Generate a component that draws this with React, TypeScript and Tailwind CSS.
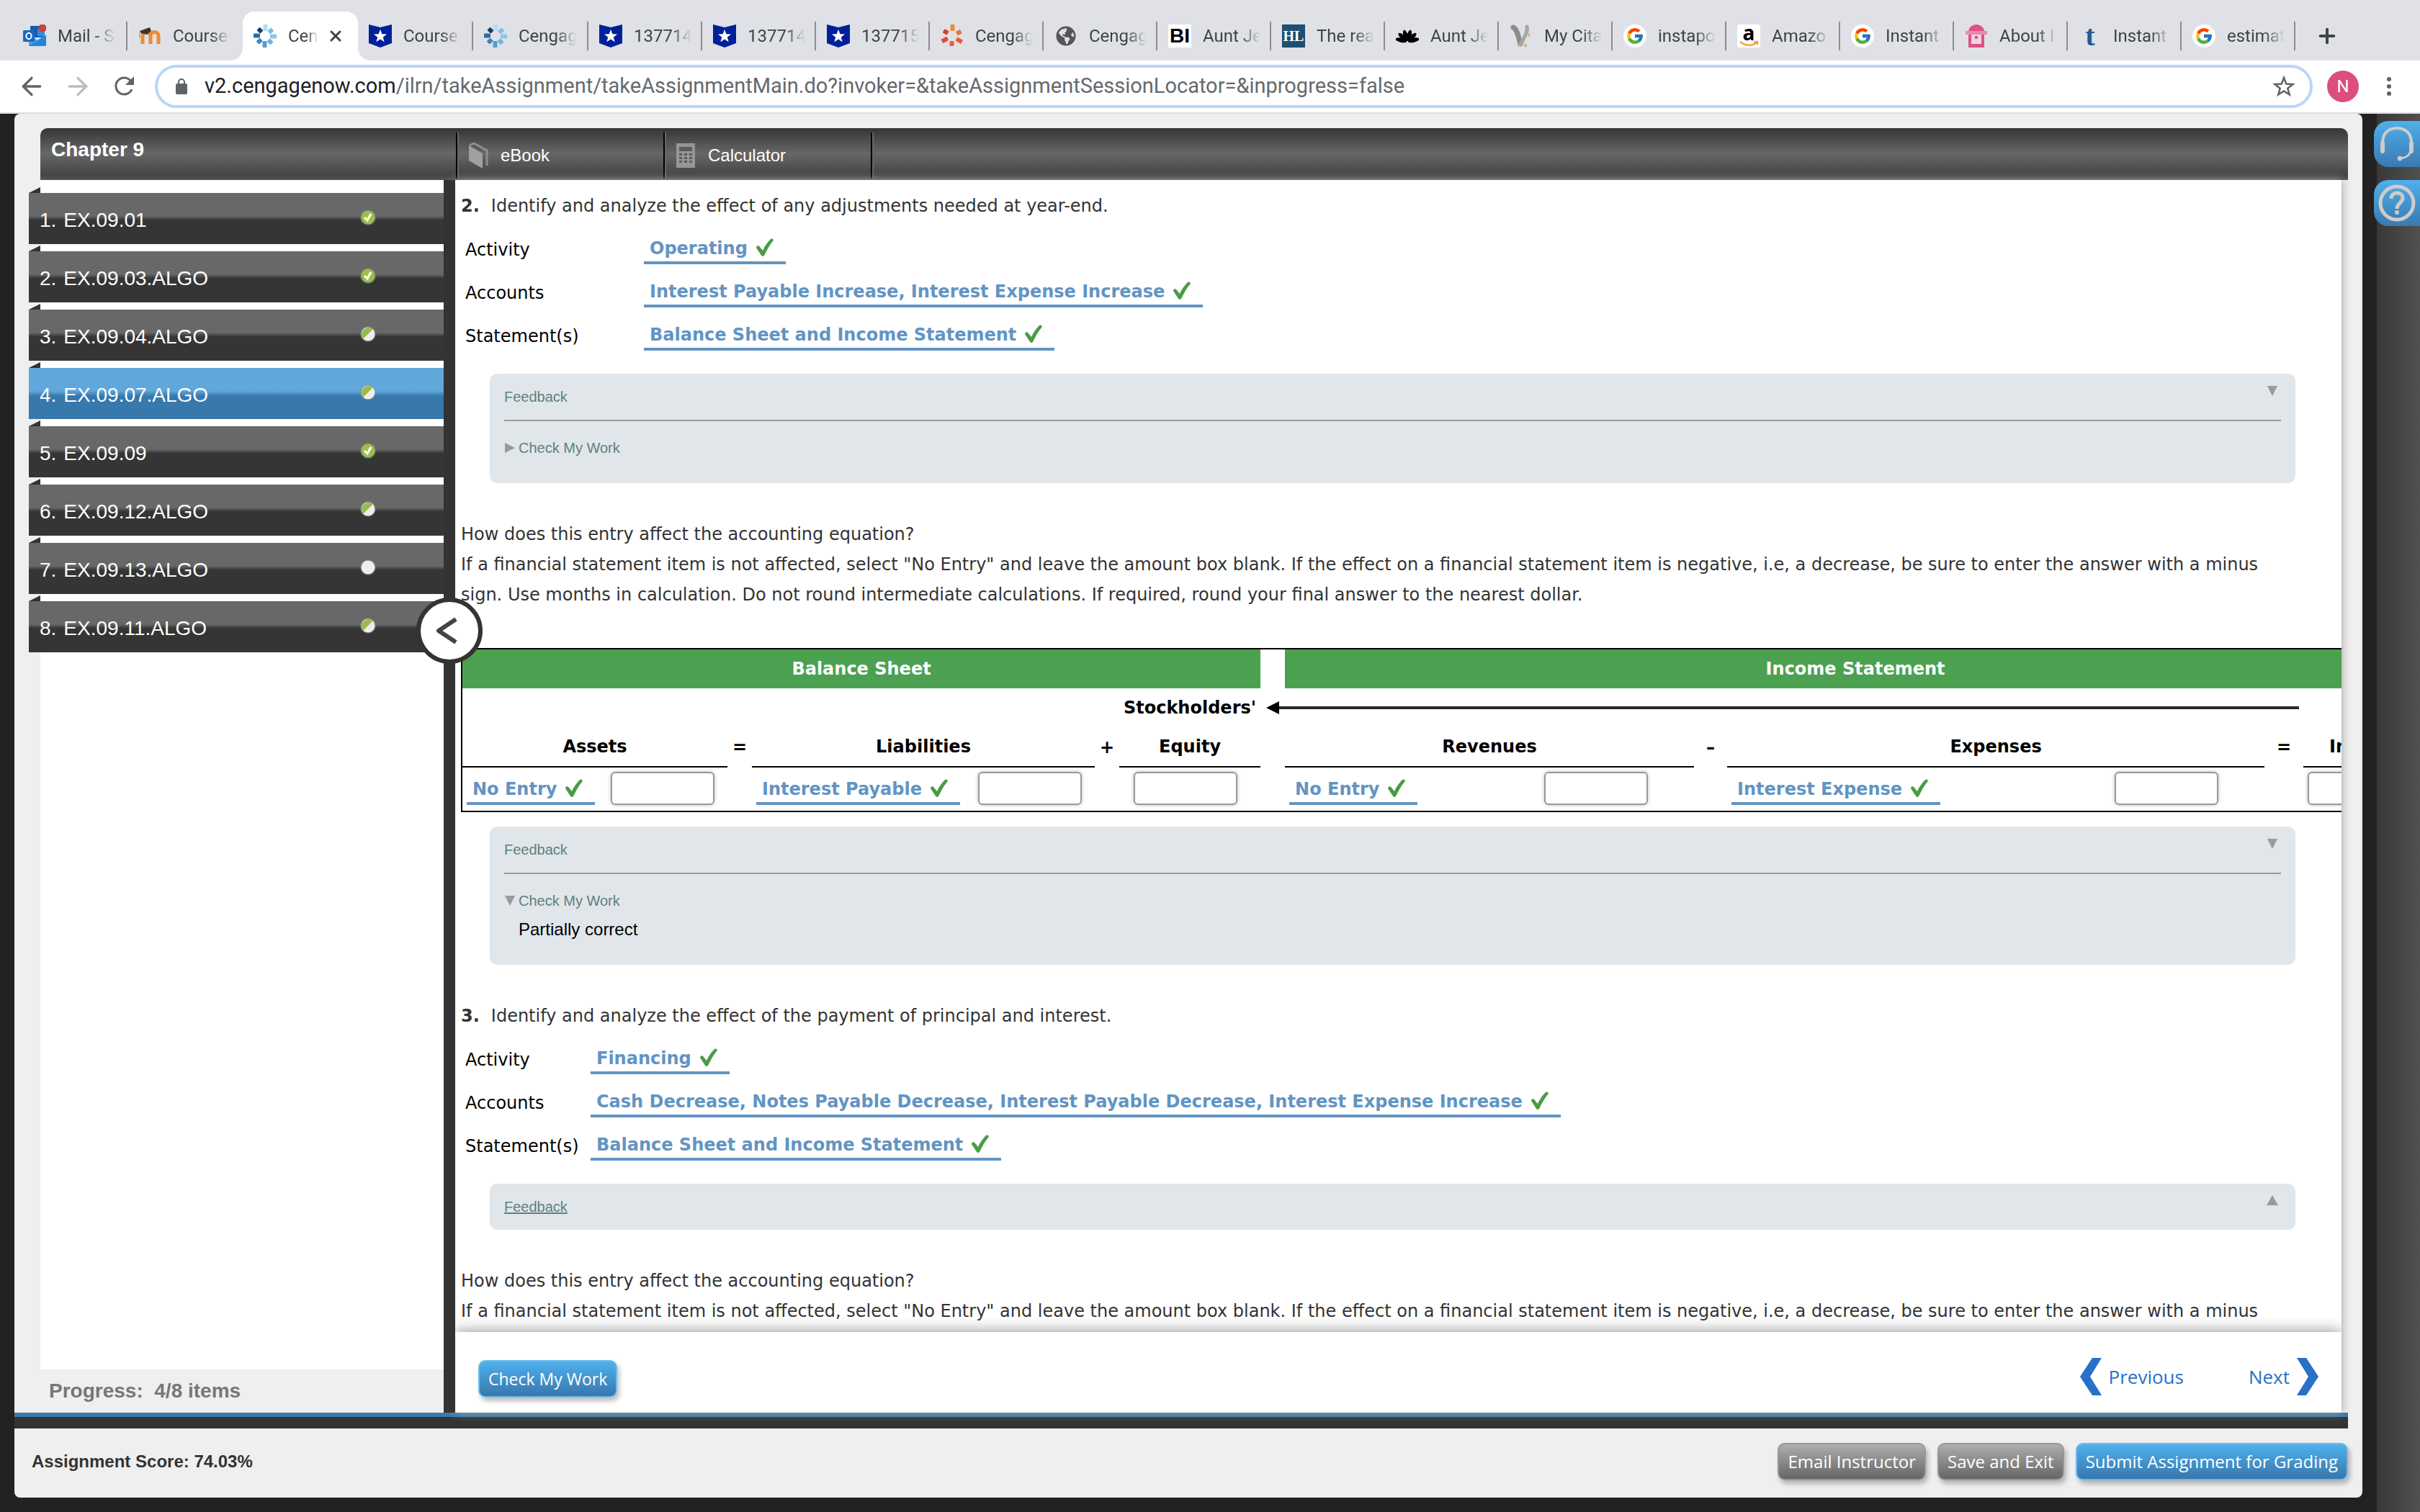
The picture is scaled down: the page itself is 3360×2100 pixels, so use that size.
import React from 'react';
import { FcGoogle } from 'react-icons/fc';
import { FaGlobeAmericas } from 'react-icons/fa';
import { ArrowLeft, ArrowRight, X, Plus } from 'lucide-react';

type Status = 'done' | 'partial' | 'empty';

const RING_BLUE = ['#b5dcf2', '#7fbfe3', '#8cc6e6', '#6fb4dc', '#4f9fd0', '#3a86bd', '#2b6ea5', '#173f66'];
const RING_ORANGE = ['#ef8b3a', '#e9743a', '#e5603a', '#e5603a', '#e04a38', '#d83a36'];

const Ring = ({ colors }: { colors: string[] }) => (
  <svg viewBox="0 0 32 32" className="h-8 w-8">
    {colors.map((color, i) => (
      <rect
        key={i}
        x="13.5"
        y={i % 2 ? 2 : 0}
        width="6"
        height={i % 2 ? 7 : 9}
        rx="1"
        fill={color}
        transform={`rotate(${(360 / colors.length) * i} 16 16)`}
      />
    ))}
  </svg>
);

const Shield = () => (
  <svg viewBox="0 0 32 32" className="h-8 w-8">
    <path d="M0 0l16 4L32 0v26l-16 6L0 26z" fill="#00209a" />
    <path d="M16 7l2.400 6.300 6.600.2-5.200 4.200 1.900 6.500L16 20.400l-5.700 3.800 1.900-6.500L7 13.500l6.600-.2z" fill="#fff" />
  </svg>
);

const Outlook = () => (
  <svg viewBox="0 0 32 32" className="h-8 w-8">
    <rect x="10" y="2" width="20" height="16" rx="1" fill="#1a5aa8" />
    <rect x="20" y="6" width="10" height="10" fill="#2f8fdf" />
    <path d="M8 14l12 8 12-8v14a2 2 0 0 1-2 2H10a2 2 0 0 1-2-2z" fill="#3fa2ea" />
    <path d="M8 30l24-15v13a2 2 0 0 1-2 2z" fill="#2484d8" />
    <rect x="0" y="8" width="16" height="16" rx="1.500" fill="#1769c4" />
    <ellipse cx="8" cy="16" rx="3.600" ry="4.200" fill="none" stroke="#fff" strokeWidth="2" />
    <circle cx="27" cy="5" r="5.500" fill="#cc3f3a" />
  </svg>
);

const Moodle = () => (
  <svg viewBox="0 0 32 32" className="h-8 w-8">
    <path d="M6 27V16a5 5 0 0 1 11 0v11M17 16a5 5 0 0 1 11 0v11" fill="none" stroke="#ee8a38" strokeWidth="5" />
    <path d="M2 9L16 4l2 5-6 5-8-2z" fill="#3b3431" />
    <path d="M2 10v9" stroke="#b9a79a" strokeWidth="1.500" />
  </svg>
);

const Peacock = () => (
  <svg viewBox="0 0 32 32" className="h-8 w-8">
    {[-76, -46, -16, 16, 46, 76].map((angle) => (
      <ellipse key={angle} cx="16" cy="15" rx="3" ry="8" transform={`rotate(${angle} 16 24)`} />
    ))}
  </svg>
);

const Vine = () => (
  <svg viewBox="0 0 32 32" className="h-8 w-8" fill="none" strokeLinecap="round">
    <path d="M5 4c5 2 7 12 10 23" stroke="#8b8c8c" strokeWidth="7" />
    <path d="M24 3c2 8-4 14-8 24" stroke="#a5a6a6" strokeWidth="5" />
    <path d="M12 29h2M22 28v2M27 14v1" stroke="#e0a868" strokeWidth="3" />
  </svg>
);

const Cupcake = () => (
  <svg viewBox="0 0 32 32" className="h-8 w-8">
    <path d="M5 10a11 10 0 0 1 22 0z" fill="#dd5286" />
    <rect x="1" y="9" width="30" height="5" fill="#e58bb0" />
    <path d="M5 14h22v18H5z" fill="#dd5286" />
    <path d="M9 14h14v13H9z" fill="#f3d3e0" />
    <path d="M14 16h4v4h-4z" fill="#dd5286" />
  </svg>
);

const Google = () => (
  <span className="flex h-8 w-8 items-center justify-center rounded-full bg-white">
    <FcGoogle className="h-[26px] w-[26px]" />
  </span>
);

const Amazon = () => (
  <span className="relative flex h-8 w-8 justify-center rounded bg-white font-['Open_Sans',sans-serif] text-[28px] leading-[22px] font-bold text-black">
    a
    <svg viewBox="0 0 32 32" className="absolute inset-0">
      <path d="M4 24c7 6 17 6 23 1M28 28v-4h-5" fill="none" stroke="#f3a23a" strokeWidth="2.500" />
    </svg>
  </span>
);

const tabs: { icon: React.ReactNode; title: string }[] = [
  { icon: <Outlook />, title: 'Mail - S' },
  { icon: <Moodle />, title: 'Course' },
  { icon: <Ring colors={RING_BLUE} />, title: 'Cen' },
  { icon: <Shield />, title: 'Course' },
  { icon: <Ring colors={RING_BLUE} />, title: 'Cengag' },
  { icon: <Shield />, title: '137714' },
  { icon: <Shield />, title: '137714' },
  { icon: <Shield />, title: '137715' },
  { icon: <Ring colors={RING_ORANGE} />, title: 'Cengag' },
  { icon: <FaGlobeAmericas className="h-7 w-8 text-[#54565b]" />, title: 'Cengag' },
  {
    icon: <span className="flex h-8 w-8 items-center justify-center bg-white font-['Liberation_Sans',sans-serif] text-[28px] font-bold text-black">BI</span>,
    title: 'Aunt Je',
  },
  {
    icon: <span className="flex h-8 w-8 items-center justify-center bg-[#1f4e70] font-['Liberation_Serif',serif] text-xl font-bold text-white">HL</span>,
    title: 'The rea',
  },
  { icon: <Peacock />, title: 'Aunt Je' },
  { icon: <Vine />, title: 'My Cita' },
  { icon: <Google />, title: 'instapo' },
  { icon: <Amazon />, title: 'Amazo' },
  { icon: <Google />, title: 'Instant' },
  { icon: <Cupcake />, title: 'About I' },
  {
    icon: <span className="flex h-8 w-8 items-center justify-center font-['Liberation_Serif',serif] text-[40px] leading-8 font-bold text-[#235a92]">t</span>,
    title: 'Instant',
  },
  { icon: <Google />, title: 'estimat' },
];

const ACTIVE_TAB = 2;

const TabStrip = () => (
  <div className="flex h-[84px] shrink-0 bg-[#dfe1e6] pt-4 pl-[17px] text-2xl text-[#3f4246]">
    {tabs.map((tab, i) => {
      const active = i === ACTIVE_TAB;
      const divider = !active && i !== ACTIVE_TAB - 1;
      return (
        <div
          key={i}
          className={`relative flex min-w-0 items-center pl-[15px] ${i < 5 ? 'basis-40' : 'basis-[158px]'} ${
            active ? 'rounded-t-2xl bg-white' : ''
          }`}
        >
          {active && (
            <>
              <span className="absolute bottom-0 -left-4 h-4 w-4 bg-[radial-gradient(circle_at_0_0,transparent_15px,white_16px)]" />
              <span className="absolute -right-4 bottom-0 h-4 w-4 bg-[radial-gradient(circle_at_100%_0,transparent_15px,white_16px)]" />
            </>
          )}
          <span className="shrink-0">{tab.icon}</span>
          <span
            className={`ml-4 overflow-hidden whitespace-nowrap ${
              active
                ? 'w-[42px] [mask-image:linear-gradient(to_right,black_60%,transparent)]'
                : 'w-20 [mask-image:linear-gradient(to_right,black_65%,transparent)]'
            }`}
          >
            {tab.title}
          </span>
          {active && (
            <button aria-label="Close tab" className="ml-3">
              <X className="h-6 w-6" strokeWidth={3} />
            </button>
          )}
          {divider && <span className="absolute right-0 h-10 w-0.5 bg-[#8b8d91]" />}
        </div>
      );
    })}
    <button aria-label="New tab" className="ml-7 flex items-center">
      <Plus className="h-8 w-8" strokeWidth={3} />
    </button>
  </div>
);

const AddressBar = () => (
  <div className="flex h-[74px] shrink-0 items-center border-b-2 border-[#dcdde3] bg-white pr-10 pl-6 text-[#5f6368]">
    <button aria-label="Back">
      <ArrowLeft className="h-10 w-10" strokeWidth={2} />
    </button>
    <button aria-label="Forward" className="ml-6 text-[#bbbdbf]">
      <ArrowRight className="h-10 w-10" strokeWidth={2} />
    </button>
    <button aria-label="Reload" className="ml-[30px]">
      <svg viewBox="0 0 30 30" className="h-[30px] w-[30px]">
        <path d="M25 19a11.500 11.500 0 1 1-1.500-11.500" fill="none" stroke="currentColor" strokeWidth="3" />
        <path d="M28 1v12H16z" fill="currentColor" />
      </svg>
    </button>
    <div className="ml-[27px] flex h-[60px] min-w-0 flex-1 items-center rounded-full border-4 border-[#b9d6fb] pr-5 pl-[25px]">
      <svg viewBox="0 0 16 22" className="h-[22px] w-4 shrink-0">
        <rect y="7" width="16" height="15" rx="2" fill="#5f6368" />
        <path d="M4 8V5a4 4 0 0 1 8 0v3" fill="none" stroke="#5f6368" strokeWidth="2" />
      </svg>
      <div className="ml-6 flex-1 text-[29px] whitespace-nowrap text-[#66696d]">
        <span className="text-[#202124]">v2.cengagenow.com</span>
        /ilrn/takeAssignment/takeAssignmentMain.do?invoker=&amp;takeAssignmentSessionLocator=&amp;inprogress=false
      </div>
      <button aria-label="Bookmark this page">
        <svg viewBox="0 0 32 32" className="h-8 w-8">
          <path d="M16 4l3.300 8.500 9.200.5-7.200 5.700 2.500 8.800L16 22.500l-7.800 5 2.500-8.800L3.500 13l9.200-.5z" fill="none" stroke="#5f6368" strokeWidth="2.500" />
        </svg>
      </button>
    </div>
    <button className="ml-5 flex h-11 w-11 items-center justify-center rounded-full bg-[#dc4f7b] text-2xl text-white">N</button>
    <button aria-label="Menu" className="ml-[39px] flex flex-col gap-1">
      <span className="h-1.5 w-1.5 rounded-full bg-[#5f6368]" />
      <span className="h-1.5 w-1.5 rounded-full bg-[#5f6368]" />
      <span className="h-1.5 w-1.5 rounded-full bg-[#5f6368]" />
    </button>
  </div>
);

const StatusDot = ({ status }: { status: Status }) => (
  <svg viewBox="0 0 24 24" className="h-6 w-6">
    <circle cx="12" cy="12" r="11" fill="#888" opacity="0.5" />
    <circle cx="12" cy="12" r="9.500" fill={status === 'done' ? '#9bbf4a' : '#ededed'} />
    {status === 'done' && <path d="M7 12l4 4 5-9" fill="none" stroke="#fff" strokeWidth="3" />}
    {status === 'partial' && <path d="M5.300 18.700A9.500 9.500 0 0 1 18.700 5.300z" fill="#98bb49" />}
  </svg>
);

const questions: { name: string; status: Status }[] = [
  { name: 'EX.09.01', status: 'done' },
  { name: 'EX.09.03.ALGO', status: 'done' },
  { name: 'EX.09.04.ALGO', status: 'partial' },
  { name: 'EX.09.07.ALGO', status: 'partial' },
  { name: 'EX.09.09', status: 'done' },
  { name: 'EX.09.12.ALGO', status: 'partial' },
  { name: 'EX.09.13.ALGO', status: 'empty' },
  { name: 'EX.09.11.ALGO', status: 'partial' },
];

const Sidebar = () => (
  <aside className="flex w-[596px] shrink-0 flex-col pl-9">
    <nav className="flex-1 bg-white pt-[18px]">
      <ul className="-ml-4 flex flex-col gap-2.5">
        {questions.map((q, i) => (
          <li key={q.name} className="relative">
            <span className="absolute -top-2 left-0 h-2 w-4 bg-[#333] [clip-path:polygon(100%_0,100%_100%,0_100%)]" />
            <a
              href="#"
              className={`flex h-[71px] items-center justify-between pr-[93px] pb-1 pl-[15px] text-[28px] text-white ${
                i === 3
                  ? 'bg-[linear-gradient(#60a7dc_45%,#3778ad_55%)]'
                  : 'bg-[linear-gradient(#686868_45%,#353535_53%)]'
              }`}
            >
              <span className="pt-2">
                <span className="mr-2.5">{i + 1}.</span>
                {q.name}
              </span>
              <StatusDot status={q.status} />
            </a>
          </li>
        ))}
      </ul>
    </nav>
    <div className="flex h-[60px] items-center pl-3 text-[28px] font-bold whitespace-pre text-[#777]">{'Progress:  4/8 items'}</div>
  </aside>
);

const Check = () => (
  <svg viewBox="0 0 24 26" className="h-[26px] w-6 shrink-0">
    <path d="M0 13c0-3 3-4 5-1l4 5C12 10 16 5 20 1c2-1.500 4.500 0 3.500 2.500C18 10 15 16 11.500 23c-1 2.500-3.500 2.500-5 0z" fill="#4b9b45" />
  </svg>
);

const Answer = ({ children }: { children: string }) => (
  <span className="flex items-start border-b-4 border-[#6294c3] pr-[17px] pb-1 pl-2 text-2xl leading-7 font-bold whitespace-nowrap text-[#6294c3]">
    <span className="mr-3">{children}</span>
    <Check />
  </span>
);

const QuestionTitle = ({ num, children }: { num: number; children: string }) => (
  <p>
    <b className="mr-4">{num}.</b>
    {children}
  </p>
);

const AnswerList = ({ rows, wide }: { rows: [string, string][]; wide?: boolean }) => (
  <table className="ml-1.5 border-collapse text-black">
    <tbody>
      {rows.map(([label, value]) => (
        <tr key={label} className="h-[60px] align-bottom">
          <th scope="row" className={`pb-1.5 text-left leading-7 font-normal ${wide ? 'w-[248px]' : 'w-[174px]'}`}>
            {label}
          </th>
          <td>
            <div className="flex">
              <Answer>{value}</Answer>
            </div>
          </td>
        </tr>
      ))}
    </tbody>
  </table>
);

const Triangle = ({ dir }: { dir: 'up' | 'down' | 'right' }) => (
  <svg viewBox="0 0 16 16" className="h-4 w-4 shrink-0">
    {dir === 'up' && <path d="M8 0l8 14H0z" fill="#959b9f" />}
    {dir === 'down' && <path d="M1 1h14L8 15z" fill="#959b9f" />}
    {dir === 'right' && <path d="M1 1l14 7-14 7z" fill="#959b9f" />}
  </svg>
);

interface FeedbackProps {
  open?: boolean;
  result?: string;
  className?: string;
}

const Feedback: React.FC<FeedbackProps> = ({ open = true, result, className }) => (
  <section
    className={`mr-16 ml-10 rounded-[10px] bg-[#e1e6ea] px-5 font-['Liberation_Sans',Arial,sans-serif] text-xl leading-6 text-[#5f807f] ${className}`}
  >
    <button className={`flex h-16 w-full items-start justify-between pt-4 pr-1 text-left ${open ? '' : 'underline'}`}>
      <span className="pt-1">Feedback</span>
      <Triangle dir={open ? 'down' : 'up'} />
    </button>
    {open && (
      <div className={`border-t-2 border-[#959b9f] pt-[25px] ${result ? 'h-32' : 'h-[88px]'}`}>
        <button className="flex items-center gap-1">
          <Triangle dir={result ? 'down' : 'right'} />
          Check My Work
        </button>
        {result && <p className="mt-3 pl-5 text-2xl leading-8 text-black">{result}</p>}
      </div>
    )}
  </section>
);

const Instructions = () => (
  <p className="mt-[50px] pr-20">
    How does this entry affect the accounting equation?
    <br />
    If a financial statement item is not affected, select "No Entry" and leave the amount box blank. If the effect on a
    financial statement item is negative, i.e, a decrease, be sure to enter the answer with a minus sign. Use months in
    calculation. Do not round intermediate calculations. If required, round your final answer to the nearest dollar.
  </p>
);

const Amount = ({ label }: { label: string }) => (
  <input
    type="text"
    aria-label={label}
    className="h-[46px] w-36 shrink-0 rounded-md border-2 border-[#999] bg-white shadow-[0_0_5px_#bbb]"
  />
);

const EntryCell = ({ value, label, inset }: { value: string; label: string; inset: string }) => (
  <td className="pb-2">
    <div className={`flex items-end justify-between pl-1.5 ${inset}`}>
      <Answer>{value}</Answer>
      <Amount label={label} />
    </div>
  </td>
);

const EquationTable = () => (
  <table className="mt-[53px] w-[2728px] table-fixed border-separate border-spacing-0 border-y-2 border-l-2 border-black text-center leading-7 text-black">
    <colgroup>
      <col className="w-[368px]" />
      <col className="w-[34px]" />
      <col className="w-[476px]" />
      <col className="w-[34px]" />
      <col className="w-[196px]" />
      <col className="w-[34px]" />
      <col className="w-[568px]" />
      <col className="w-[46px]" />
      <col className="w-[746px]" />
      <col className="w-[54px]" />
      <col className="w-[170px]" />
    </colgroup>
    <thead className="text-2xl leading-7">
      <tr className="h-[54px] text-white">
        <th colSpan={5} className="bg-[#4ca151]">
          Balance Sheet
        </th>
        <td />
        <th colSpan={5} className="bg-[#4ca151]">
          Income Statement
        </th>
      </tr>
      <tr className="h-[54px]">
        <td colSpan={4} />
        <th>Stockholders'</th>
        <td colSpan={5} className="pr-1.5 pl-2">
          <div className="flex items-center">
            <svg viewBox="0 0 18 18" className="h-[18px] w-[18px]">
              <path d="M0 9L18 0v18z" />
            </svg>
            <div className="h-1 flex-1 bg-[#2a2829]" />
          </div>
        </td>
        <td />
      </tr>
      <tr className="h-14">
        <th className="border-b-2">Assets</th>
        <th>=</th>
        <th className="border-b-2">Liabilities</th>
        <th>+</th>
        <th className="border-b-2">Equity</th>
        <td />
        <th className="border-b-2">Revenues</th>
        <th>–</th>
        <th className="border-b-2">Expenses</th>
        <th>=</th>
        <th className="border-b-2">Income</th>
      </tr>
    </thead>
    <tbody>
      <tr className="h-[60px] align-bottom">
        <EntryCell value="No Entry" label="Assets amount" inset="pr-[18px]" />
        <td />
        <EntryCell value="Interest Payable" label="Liabilities amount" inset="pr-[18px]" />
        <td />
        <td className="pb-2">
          <div className="flex pl-5">
            <Amount label="Equity amount" />
          </div>
        </td>
        <td />
        <EntryCell value="No Entry" label="Revenues amount" inset="pr-16" />
        <td />
        <EntryCell value="Interest Expense" label="Expenses amount" inset="pr-16" />
        <td />
        <td className="pb-2">
          <div className="flex pl-1.5">
            <Amount label="Income amount" />
          </div>
        </td>
      </tr>
    </tbody>
  </table>
);

const blueButton = 'border-[#6bbbea] bg-linear-to-b from-[#4fb1ee] to-[#3877ac] text-2xl';
const blueSmallButton = 'border-[#6bbbea] bg-linear-to-b from-[#4fb1ee] to-[#3877ac] text-[23px]';
const grayButton = 'border-[#979797] bg-linear-to-b from-[#aeaeae] to-[#666] text-2xl';

const ActionButton = ({ tone, children }: { tone: string; children: string }) => (
  <button
    className={`h-[52px] rounded-[10px] border-2 px-3 font-['Open_Sans','Noto_Sans',sans-serif] whitespace-nowrap text-white shadow-[3px_5px_6px_rgba(0,0,0,0.25)] ${tone}`}
  >
    {children}
  </button>
);

const Chevron = ({ flip }: { flip?: boolean }) => (
  <svg viewBox="0 0 30 52" className="h-[52px] w-[30px]">
    <path d={flip ? 'M0 0h13l17 26-17 26H0l16-26z' : 'M30 0H17L0 26l17 26h13L14 26z'} fill="#2970c8" />
  </svg>
);

const Work = () => (
  <main className="relative flex min-w-0 flex-1 flex-col bg-white shadow-[0_0_12px_#999]">
    <div className="min-h-0 flex-1 overflow-hidden pt-[15px] pl-2 font-['DejaVu_Sans',Verdana,sans-serif] text-2xl leading-[42px] text-[#333]">
      <QuestionTitle num={2}>Identify and analyze the effect of any adjustments needed at year-end.</QuestionTitle>
      <AnswerList
        wide
        rows={[
          ['Activity', 'Operating'],
          ['Accounts', 'Interest Payable Increase, Interest Expense Increase'],
          ['Statement(s)', 'Balance Sheet and Income Statement'],
        ]}
      />
      <Feedback className="mt-8" />
      <Instructions />
      <EquationTable />
      <Feedback className="mt-5 mb-[50px]" result="Partially correct" />
      <QuestionTitle num={3}>Identify and analyze the effect of the payment of principal and interest.</QuestionTitle>
      <AnswerList
        rows={[
          ['Activity', 'Financing'],
          ['Accounts', 'Cash Decrease, Notes Payable Decrease, Interest Payable Decrease, Interest Expense Increase'],
          ['Statement(s)', 'Balance Sheet and Income Statement'],
        ]}
      />
      <Feedback className="mt-8" open={false} />
      <Instructions />
    </div>
    <footer className="relative flex h-28 shrink-0 items-center justify-between bg-white pt-3 pr-8 pl-8 shadow-[0_0_20px_#888] [clip-path:inset(-20px_0_0_0)]">
      <div className="flex pt-1.5">
        <ActionButton tone={blueSmallButton}>Check My Work</ActionButton>
      </div>
      <div className="flex gap-[90px] font-['Open_Sans','Noto_Sans',sans-serif] text-[26px] text-[#2970c8]">
        <a href="#" className="flex items-center gap-2.5">
          <Chevron />
          Previous
        </a>
        <a href="#" className="flex items-center gap-2.5">
          Next
          <Chevron flip />
        </a>
      </div>
    </footer>
  </main>
);

const HeaderBar = () => (
  <header className="mr-5 ml-9 flex h-[72px] shrink-0 rounded-t-[10px] bg-[linear-gradient(#363636,#676767_49%,#444_90%,#555)] text-white">
    <h1 className="w-[577px] pt-3.5 pl-[15px] text-[28px] leading-8 font-bold">Chapter 9</h1>
    <button className="mt-1.5 mb-0.5 flex w-72 items-center border-l-2 border-black text-2xl shadow-[inset_2px_0_#666]">
      <svg viewBox="0 0 28 36" className="mr-4 ml-4 h-9 w-7">
        <path d="M0 4l19 11v21L0 25z" fill="#a0a0a0" />
        <path d="M1 4l6-3 18 10v21" fill="none" stroke="#8e8e8e" strokeWidth="3" />
      </svg>
      eBook
    </button>
    <button className="mt-1.5 mb-0.5 flex w-72 items-center border-l-2 border-black text-2xl shadow-[inset_2px_0_#666]">
      <svg viewBox="0 0 26 34" className="mr-[18px] ml-4 h-[34px] w-[26px]">
        <rect width="26" height="34" fill="#969696" />
        <rect x="4" y="5" width="18" height="6" fill="#5c5c5c" />
        {[14, 19, 24].map((y) =>
          [4, 11, 18].map((x) => <rect key={`${x}-${y}`} x={x} y={y} width="4" height="3" fill="#5c5c5c" />)
        )}
      </svg>
      Calculator
    </button>
    <span className="mt-1.5 mb-0.5 border-l-2 border-black shadow-[2px_0_#666]" />
  </header>
);

const HelpRail = () => (
  <div className="flex w-20 shrink-0 flex-col items-end gap-[18px] bg-[linear-gradient(to_right,#222_20px,#383838_20px,#505050)] pt-2.5">
    <button aria-label="Support" className="flex h-16 w-16 items-center justify-center rounded-l-[20px] bg-linear-to-b from-[#4fb0ec] to-[#3a79b0]">
      <svg viewBox="0 0 48 50" className="h-[50px] w-12" fill="none" stroke="#ccc" strokeLinecap="round">
        <path d="M4 27C3 12 10 3 24 3s21 9 20 24" strokeWidth="4" />
        <path d="M4 24v11M44 24v11" strokeWidth="6" />
        <path d="M43 35c-2 7-7 9-14 10" strokeWidth="3" />
        <circle cx="28" cy="45" r="3" fill="#ccc" />
      </svg>
    </button>
    <button aria-label="Help" className="flex h-16 w-16 items-center justify-center rounded-l-[20px] bg-linear-to-b from-[#4fb0ec] to-[#3a79b0]">
      <svg viewBox="0 0 52 52" className="h-[52px] w-[52px]" fill="none" stroke="#ccc">
        <circle cx="26" cy="26" r="23" strokeWidth="5" />
        <path d="M18 20c0-11 16-10 16-1 0 7-8 7-8 15" strokeWidth="5" />
        <circle cx="26" cy="39" r="1.500" strokeWidth="3" />
      </svg>
    </button>
  </div>
);

export default function App() {
  return (
    <div className="flex h-screen flex-col overflow-hidden bg-[#222] font-[Roboto,sans-serif]">
      <TabStrip />
      <AddressBar />
      <div className="flex min-h-0 flex-1 font-['Liberation_Sans',Arial,sans-serif]">
        <div className="mb-5 ml-5 flex min-w-0 flex-1 flex-col rounded-lg bg-[#efefef] pt-5">
          <HeaderBar />
          <div className="flex min-h-0 flex-1 pr-[29px]">
            <Sidebar />
            <div className="relative z-10 w-4 shrink-0 bg-[#333]">
              <button
                aria-label="Collapse question list"
                className="absolute top-[580px] -left-[38px] flex h-[92px] w-[92px] items-center justify-center rounded-full border-[6px] border-[#333] bg-white"
              >
                <svg viewBox="0 0 30 38" className="mr-2 h-[38px] w-[30px]">
                  <path d="M28 3L4 19l24 16" fill="none" stroke="#444" strokeWidth="6" strokeLinejoin="round" />
                </svg>
              </button>
            </div>
            <Work />
          </div>
          <div className="mr-5 h-[22px] shrink-0 border-t-[6px] border-[#387aad] bg-[#333]" />
          <div className="flex h-24 shrink-0 items-center justify-between pr-5 pl-6">
            <p className="pb-1 text-2xl font-bold text-[#333]">Assignment Score: 74.03%</p>
            <div className="flex gap-4 pb-1">
              <ActionButton tone={grayButton}>Email Instructor</ActionButton>
              <ActionButton tone={grayButton}>Save and Exit</ActionButton>
              <ActionButton tone={blueButton}>Submit Assignment for Grading</ActionButton>
            </div>
          </div>
        </div>
        <HelpRail />
      </div>
    </div>
  );
}
